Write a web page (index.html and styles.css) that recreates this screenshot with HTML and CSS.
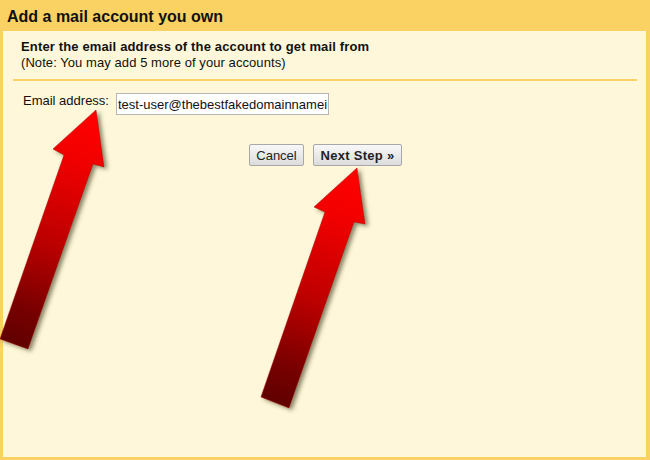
FILE: index.html
```html
<!DOCTYPE html>
<html lang="en">
<head>
  <meta charset="UTF-8" />
  <title>Add a mail account you own</title>
  <link rel="stylesheet" href="styles.css">
</head>
<body>
  <div class="dialog">
    <div class="dialog-title">Add a mail account you own</div>
    <div class="panel">
      <div class="intro">
        <div class="intro-head">Enter the email address of the account to get mail from</div>
        <div class="intro-note">(Note: You may add 5 more of your accounts)</div>
      </div>
      <div class="field-row">
        <label class="field-label" for="email">Email address:</label>
        <input class="field-input" id="email" type="text" value="test-user@thebestfakedomainnameintheworld.com" />
      </div>
      <div class="button-row">
        <button class="btn btn-cancel">Cancel</button>
        <button class="btn btn-next">Next Step »</button>
      </div>
    </div>
  </div>

  <!-- red arrows pasted on top of the screenshot -->
  <svg class="arrows" width="650" height="460" viewBox="0 0 650 460">
    <defs>
      <linearGradient id="arrowFill1" gradientUnits="userSpaceOnUse" x1="96" y1="118" x2="14" y2="345">
        <stop offset="0" stop-color="#ff0000" />
        <stop offset="0.2" stop-color="#f00000" />
        <stop offset="0.55" stop-color="#bc0000" />
        <stop offset="0.85" stop-color="#760000" />
        <stop offset="1" stop-color="#600000" />
      </linearGradient>
      <linearGradient id="arrowFill2" gradientUnits="userSpaceOnUse" x1="357" y1="176" x2="275" y2="403">
        <stop offset="0" stop-color="#ff0000" />
        <stop offset="0.2" stop-color="#f00000" />
        <stop offset="0.55" stop-color="#bc0000" />
        <stop offset="0.85" stop-color="#760000" />
        <stop offset="1" stop-color="#600000" />
      </linearGradient>
      <filter id="arrowShadow" x="-30%" y="-30%" width="160%" height="160%">
        <feDropShadow dx="3" dy="2" stdDeviation="2" flood-color="#3a3a20" flood-opacity="0.6" />
      </filter>
    </defs>
    <polygon class="arrow" fill="url(#arrowFill1)" filter="url(#arrowShadow)"
      points="96,110 104,167 93,164 28,349 0,339 64,155 53,149" />
    <polygon class="arrow" fill="url(#arrowFill2)" filter="url(#arrowShadow)"
      points="357,168 365,224 354,222 289,408 261,397 325,212 314,207" />
  </svg>
</body>
</html>
```

FILE: styles.css
```css
body {
  margin: 0;
  width: 650px;
  height: 460px;
  overflow: hidden;
  position: relative;
  font-family: "Liberation Sans", Arial, sans-serif;
  color: #111;
}

.dialog {
  height: 460px;
  box-sizing: border-box;
  background: #fad163;
  padding: 0 4px 3px 3px;
  display: flex;
  flex-direction: column;
}

.dialog-title {
  height: 31px;
  line-height: 33px;
  padding-left: 4px;
  font-size: 16px;
  font-weight: bold;
}

.panel {
  flex: 1;
  background: #fff7d9;
  padding: 0 9px 0 10px;
}

.intro {
  padding: 8px 0 8px 8px;
  border-bottom: 2px solid #fad163;
  font-size: 13px;
  line-height: 16px;
}

.intro-head {
  font-weight: bold;
  letter-spacing: 0.145px;
}

.intro-note {
  letter-spacing: 0.07px;
}

.field-row {
  display: flex;
  align-items: flex-start;
  margin-top: 12px;
  padding-left: 10px;
}

.field-label {
  width: 93px;
  font-size: 13px;
  line-height: 15px;
}

.field-input {
  width: 213px;
  height: 22px;
  box-sizing: border-box;
  border: 1px solid #b5b5b5;
  padding: 0 1px;
  background: #fff;
  font-family: inherit;
  font-size: 13px;
  color: #111;
  outline: none;
}

.button-row {
  display: flex;
  gap: 9px;
  margin-top: 29px;
  padding-left: 236px;
}

.btn {
  height: 22px;
  padding: 0;
  border: 1px solid #a8a8a8;
  border-radius: 2px;
  background: linear-gradient(#f8f8f8, #dcdcdc);
  font-family: inherit;
  font-size: 13px;
  color: #222;
}

.btn-cancel {
  width: 55px;
}

.btn-next {
  width: 89px;
  font-weight: bold;
  letter-spacing: 0.3px;
}

.arrows {
  position: absolute;
  left: 0;
  top: 0;
  pointer-events: none;
}

.arrow {
  stroke: #a00000;
  stroke-width: 0.5;
}
```
